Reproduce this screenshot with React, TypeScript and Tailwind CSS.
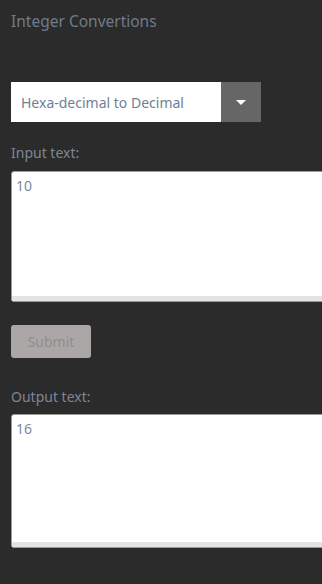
import React from "react";

export default function App() {
  const font = { fontFamily: '"Noto Sans", "Open Sans", sans-serif' };
  return (
    <div className="w-[322px] h-[584px] bg-[#2b2b2b] overflow-hidden" style={font}>
      <div className="pl-[11px]">
        <div className="pt-[11px] text-[15.5px] leading-[20px] text-[#6e7c8a]">Integer Convertions</div>
        <div className="mt-[51px] flex h-[40px] w-[250px]">
          <div className="flex-1 bg-white flex items-center pl-[10px] text-[14px] text-[#6f7f93]">
            Hexa-decimal to Decimal
          </div>
          <div className="w-[40px] bg-[#666666] flex items-center justify-center">
            <div className="w-0 h-0 border-l-[5px] border-r-[5px] border-t-[5px] border-l-transparent border-r-transparent border-t-white" />
          </div>
        </div>
        <div className="mt-[22px] text-[14px] leading-[18px] text-[#7d8793]">Input text:</div>
        <div className="mt-[9px] w-[330px] h-[131px] bg-white border border-[#9a9a9a] rounded-tl-[3px] rounded-bl-[3px] flex flex-col">
          <div className="flex-1 pl-[4px] pt-[5px] text-[14px] leading-[18px] text-[#7a8aa0]">10</div>
          <div className="h-[5px] bg-[#e3e3e3]" />
        </div>
        <div className="mt-[23px] w-[80px] h-[33px] rounded-[3px] bg-[#aba7a7] flex items-center justify-center text-[14px] text-[#8e8e8e]">
          Submit
        </div>
        <div className="mt-[30px] text-[14px] leading-[18px] text-[#7d8793]">Output text:</div>
        <div className="mt-[8px] w-[330px] h-[134px] bg-white border border-[#9a9a9a] rounded-tl-[3px] rounded-bl-[3px] flex flex-col">
          <div className="flex-1 pl-[4px] pt-[5px] text-[14px] leading-[18px] text-[#7a8aa0]">16</div>
          <div className="h-[5px] bg-[#e3e3e3]" />
        </div>
      </div>
    </div>
  );
}
